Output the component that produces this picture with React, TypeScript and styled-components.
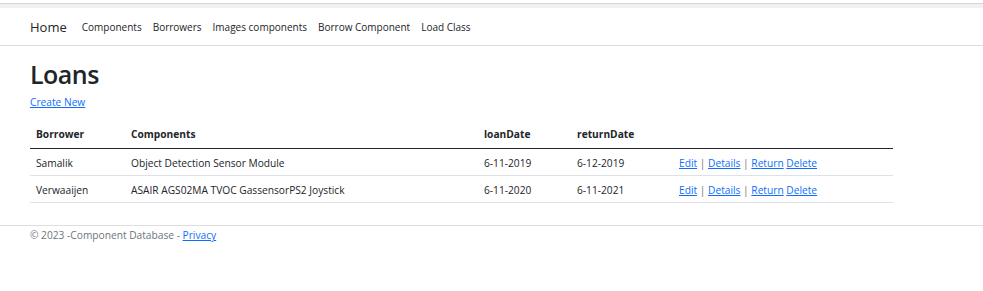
import React from 'react';
import styled, { createGlobalStyle } from 'styled-components';

const GlobalStyle = createGlobalStyle`
  html, body {
    margin: 0;
    padding: 0;
    background: #fff;
    font-family: "Open Sans", "Noto Sans", Arial, sans-serif;
    color: #212529;
  }
`;

const TopStrip = styled.div`
  height: 4px;
  margin-top: 3px;
  border-top: 1px solid #d6d6d6;
  background: #f1f1f1;
`;

const NavBar = styled.nav`
  display: flex;
  align-items: center;
  height: 37px;
  padding: 0 30px;
  border-bottom: 1px solid #dedede;
`;

const Brand = styled.a`
  font-size: 13px;
  color: #212529;
  text-decoration: none;
  margin-right: 15px;
`;

const NavLink = styled.a`
  font-size: 10px;
  color: #212529;
  text-decoration: none;
  margin-right: 11px;
`;

const Main = styled.main`
  padding: 11px 30px 0;
`;

const Title = styled.h1`
  margin: 0;
  font-size: 25px;
  font-weight: 600;
  line-height: 34px;
  letter-spacing: -0.5px;
`;

const Link = styled.a`
  color: #0d6efd;
  text-decoration: underline;
  font-size: 10.2px;
`;

const CreateLine = styled.p`
  margin: 0 0 9px;
  line-height: 18px;
`;

const Table = styled.table`
  width: 863px;
  table-layout: fixed;
  border-collapse: collapse;
  font-size: 10.2px;
  margin-bottom: 22px;
`;

const Th = styled.th<{ $w: number }>`
  text-align: left;
  font-weight: 700;
  padding: 6px 6px 7px;
  height: 15px;
  border-bottom: 1px solid #212529;
  width: ${p => p.$w}px;
`;

const Td = styled.td`
  padding: 6px 6px 5px;
  height: 15px;
  border-bottom: 1px solid #dee2e6;
  white-space: nowrap;
`;

const Sep = styled.span`
  color: #6c757d;
`;

const Footer = styled.footer`
  border-top: 1px solid #dedede;
  padding: 0 30px;
  font-size: 10.2px;
  color: #6c757d;
  line-height: 18px;
`;

const loans = [
  { borrower: 'Samalik', components: 'Object Detection Sensor Module', loanDate: '6-11-2019', returnDate: '6-12-2019' },
  { borrower: 'Verwaaijen', components: 'ASAIR AGS02MA TVOC GassensorPS2 Joystick', loanDate: '6-11-2020', returnDate: '6-11-2021' },
];

const App: React.FC = () => {
  return (
    <>
      <GlobalStyle />
      <TopStrip />
      <NavBar>
        <Brand href="#">Home</Brand>
        <NavLink href="#">Components</NavLink>
        <NavLink href="#">Borrowers</NavLink>
        <NavLink href="#">Images components</NavLink>
        <NavLink href="#">Borrow Component</NavLink>
        <NavLink href="#">Load Class</NavLink>
      </NavBar>
      <Main>
        <Title>Loans</Title>
        <CreateLine>
          <Link href="#">Create New</Link>
        </CreateLine>
        <Table>
          <thead>
            <tr>
              <Th $w={83}>Borrower</Th>
              <Th $w={341}>Components</Th>
              <Th $w={81}>loanDate</Th>
              <Th $w={90}>returnDate</Th>
              <Th $w={208}></Th>
            </tr>
          </thead>
          <tbody>
            {loans.map(l => (
              <tr key={l.borrower}>
                <Td>{l.borrower}</Td>
                <Td>{l.components}</Td>
                <Td>{l.loanDate}</Td>
                <Td>{l.returnDate}</Td>
                <Td>
                  <Link href="#">Edit</Link> <Sep>|</Sep> <Link href="#">Details</Link> <Sep>|</Sep>{' '}
                  <Link href="#">Return</Link> <Link href="#">Delete</Link>
                </Td>
              </tr>
            ))}
          </tbody>
        </Table>
      </Main>
      <Footer>
        &copy; 2023 -Component Database - <Link href="#">Privacy</Link>
      </Footer>
    </>
  );
};

export default App;
